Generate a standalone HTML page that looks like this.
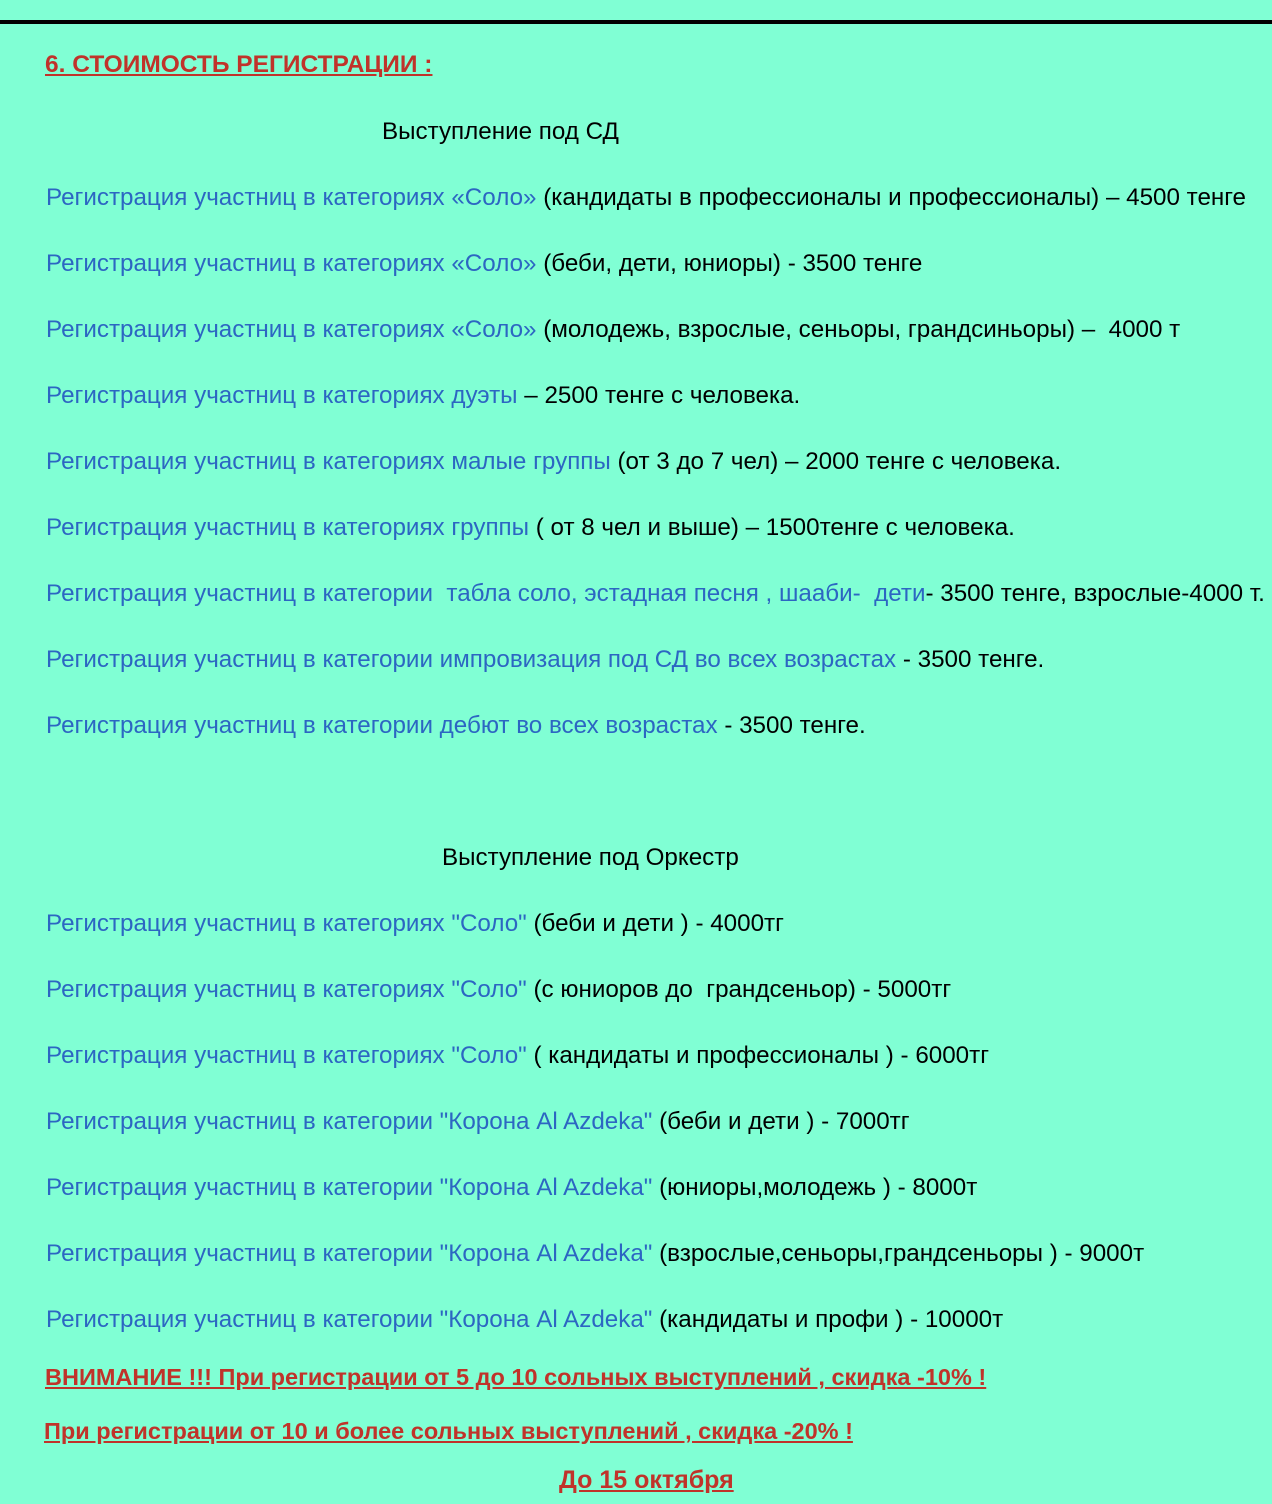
<!DOCTYPE html>
<html><head><meta charset="utf-8"><style>
html,body{margin:0;padding:0}
body{width:1272px;height:1504px;background:#80FFD4;position:relative;overflow:hidden;font-family:"Liberation Sans",sans-serif;font-size:24.2px;color:#000}
.bar{position:absolute;left:0;top:20px;width:1272px;height:4px;background:#000}
.l{position:absolute;left:46px;line-height:30px;white-space:pre;margin-top:1px}
.b{color:#2C66C2}
.r{color:#C0332A;font-weight:bold;text-decoration:underline;font-size:23.5px}
</style></head><body>
<div class="bar"></div>
<div class="l r" style="top:49px;left:45px;font-size:24.5px">6. СТОИМОСТЬ РЕГИСТРАЦИИ :</div>
<div class="l" style="top:116px;left:382px">Выступление под СД</div>
<div class="l" style="top:182px"><span class="b">Регистрация участниц в категориях «Соло»</span> (кандидаты в профессионалы и профессионалы) – 4500 тенге</div>
<div class="l" style="top:248px"><span class="b">Регистрация участниц в категориях «Соло»</span> (беби, дети, юниоры) - 3500 тенге</div>
<div class="l" style="top:314px"><span class="b">Регистрация участниц в категориях «Соло»</span> (молодежь, взрослые, сеньоры, грандсиньоры) –  4000 т</div>
<div class="l" style="top:380px"><span class="b">Регистрация участниц в категориях дуэты</span> – 2500 тенге с человека.</div>
<div class="l" style="top:446px"><span class="b">Регистрация участниц в категориях малые группы</span> (от 3 до 7 чел) – 2000 тенге с человека.</div>
<div class="l" style="top:512px"><span class="b">Регистрация участниц в категориях группы</span> ( от 8 чел и выше) – 1500тенге с человека.</div>
<div class="l" style="top:578px"><span class="b">Регистрация участниц в категории  табла соло, эстадная песня , шааби-  дети</span>- 3500 тенге, взрослые-4000 т.</div>
<div class="l" style="top:644px"><span class="b">Регистрация участниц в категории импровизация под СД во всех возрастах</span> - 3500 тенге.</div>
<div class="l" style="top:710px"><span class="b">Регистрация участниц в категории дебют во всех возрастах</span> - 3500 тенге.</div>
<div class="l" style="top:842px;left:442px">Выступление под Оркестр</div>
<div class="l" style="top:908px"><span class="b">Регистрация участниц в категориях "Соло"</span> (беби и дети ) - 4000тг</div>
<div class="l" style="top:974px"><span class="b">Регистрация участниц в категориях "Соло"</span> (с юниоров до  грандсеньор) - 5000тг</div>
<div class="l" style="top:1040px"><span class="b">Регистрация участниц в категориях "Соло"</span> ( кандидаты и профессионалы ) - 6000тг</div>
<div class="l" style="top:1106px"><span class="b">Регистрация участниц в категории "Корона Al Azdeka"</span> (беби и дети ) - 7000тг</div>
<div class="l" style="top:1172px"><span class="b">Регистрация участниц в категории "Корона Al Azdeka"</span> (юниоры,молодежь ) - 8000т</div>
<div class="l" style="top:1238px"><span class="b">Регистрация участниц в категории "Корона Al Azdeka"</span> (взрослые,сеньоры,грандсеньоры ) - 9000т</div>
<div class="l" style="top:1304px"><span class="b">Регистрация участниц в категории "Корона Al Azdeka"</span> (кандидаты и профи ) - 10000т</div>
<div class="l r" style="top:1361px;left:45px">ВНИМАНИЕ !!! При регистрации от 5 до 10 сольных выступлений , скидка -10% !</div>
<div class="l r" style="top:1415px;left:44px">При регистрации от 10 и более сольных выступлений , скидка -20% !</div>
<div class="l r" style="top:1464px;left:559px;font-size:25px">До 15 октября</div>
</body></html>
